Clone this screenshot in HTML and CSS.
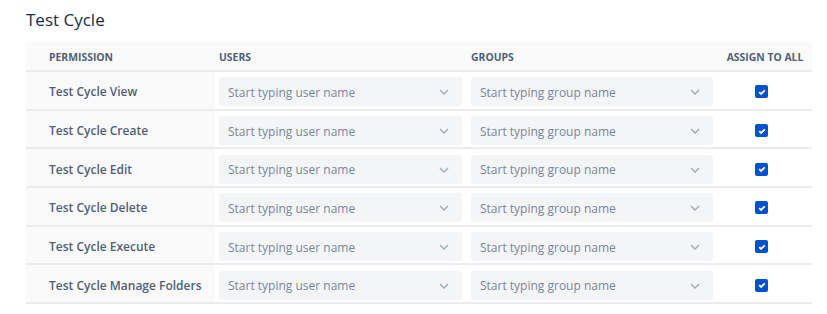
FILE: index.html
```html
<!DOCTYPE html>
<html lang="en">
  <head>
    <meta charset="utf-8" />
    <title>Test Cycle permissions</title>
    <link rel="stylesheet" href="styles.css">
  </head>
  <body>
    <div class="page">
      <h2 class="section-title">Test Cycle</h2>

      <div class="perm-table">
        <div class="perm-row head">
          <div class="cell name">Permission</div>
          <div class="cell">Users</div>
          <div class="cell">Groups</div>
          <div class="cell assign">Assign to all</div>
        </div>

        <div class="perm-row">
          <div class="cell name">Test Cycle View</div>
          <div class="cell"><div class="picker"><span>Start typing user name</span><svg class="chev" viewBox="0 0 10 6"><path d="M1 1l4 4 4-4" /></svg></div></div>
          <div class="cell"><div class="picker"><span>Start typing group name</span><svg class="chev" viewBox="0 0 10 6"><path d="M1 1l4 4 4-4" /></svg></div></div>
          <div class="cell check-cell"><span class="check"><svg viewBox="0 0 12 12"><path d="M3.2 6.2l1.9 1.8 3.7-3.7" /></svg></span></div>
        </div>

        <div class="perm-row">
          <div class="cell name">Test Cycle Create</div>
          <div class="cell"><div class="picker"><span>Start typing user name</span><svg class="chev" viewBox="0 0 10 6"><path d="M1 1l4 4 4-4" /></svg></div></div>
          <div class="cell"><div class="picker"><span>Start typing group name</span><svg class="chev" viewBox="0 0 10 6"><path d="M1 1l4 4 4-4" /></svg></div></div>
          <div class="cell check-cell"><span class="check"><svg viewBox="0 0 12 12"><path d="M3.2 6.2l1.9 1.8 3.7-3.7" /></svg></span></div>
        </div>

        <div class="perm-row">
          <div class="cell name">Test Cycle Edit</div>
          <div class="cell"><div class="picker"><span>Start typing user name</span><svg class="chev" viewBox="0 0 10 6"><path d="M1 1l4 4 4-4" /></svg></div></div>
          <div class="cell"><div class="picker"><span>Start typing group name</span><svg class="chev" viewBox="0 0 10 6"><path d="M1 1l4 4 4-4" /></svg></div></div>
          <div class="cell check-cell"><span class="check"><svg viewBox="0 0 12 12"><path d="M3.2 6.2l1.9 1.8 3.7-3.7" /></svg></span></div>
        </div>

        <div class="perm-row">
          <div class="cell name">Test Cycle Delete</div>
          <div class="cell"><div class="picker"><span>Start typing user name</span><svg class="chev" viewBox="0 0 10 6"><path d="M1 1l4 4 4-4" /></svg></div></div>
          <div class="cell"><div class="picker"><span>Start typing group name</span><svg class="chev" viewBox="0 0 10 6"><path d="M1 1l4 4 4-4" /></svg></div></div>
          <div class="cell check-cell"><span class="check"><svg viewBox="0 0 12 12"><path d="M3.2 6.2l1.9 1.8 3.7-3.7" /></svg></span></div>
        </div>

        <div class="perm-row">
          <div class="cell name">Test Cycle Execute</div>
          <div class="cell"><div class="picker"><span>Start typing user name</span><svg class="chev" viewBox="0 0 10 6"><path d="M1 1l4 4 4-4" /></svg></div></div>
          <div class="cell"><div class="picker"><span>Start typing group name</span><svg class="chev" viewBox="0 0 10 6"><path d="M1 1l4 4 4-4" /></svg></div></div>
          <div class="cell check-cell"><span class="check"><svg viewBox="0 0 12 12"><path d="M3.2 6.2l1.9 1.8 3.7-3.7" /></svg></span></div>
        </div>

        <div class="perm-row">
          <div class="cell name">Test Cycle Manage Folders</div>
          <div class="cell"><div class="picker"><span>Start typing user name</span><svg class="chev" viewBox="0 0 10 6"><path d="M1 1l4 4 4-4" /></svg></div></div>
          <div class="cell"><div class="picker"><span>Start typing group name</span><svg class="chev" viewBox="0 0 10 6"><path d="M1 1l4 4 4-4" /></svg></div></div>
          <div class="cell check-cell"><span class="check"><svg viewBox="0 0 12 12"><path d="M3.2 6.2l1.9 1.8 3.7-3.7" /></svg></span></div>
        </div>
      </div>
    </div>
  </body>
</html>
```

FILE: styles.css
```css
* {
  margin: 0;
  padding: 0;
  box-sizing: border-box;
}

body {
  font-family: "Open Sans", "Noto Sans", sans-serif;
  background: #ffffff;
  color: #42526e;
}

.page {
  padding: 8px 15px 0 26px;
}

.section-title {
  font-size: 17px;
  font-weight: 500;
  color: #172b4d;
  line-height: 24px;
  height: 34px;
}

.perm-table {
  width: 786px;
}

.perm-row {
  display: grid;
  grid-template-columns: 189px 252px 251px 94px;
  height: 38.7px;
  border-bottom: 2px solid #ebecf0;
}

.perm-row.head {
  height: 30px;
  background: #fafafa;
  font-size: 10.4px;
  font-weight: 700;
  text-transform: uppercase;
  color: #505f79;
}

.cell {
  display: flex;
  align-items: center;
  padding: 1px 5px 0 4px;
  white-space: nowrap;
}

.cell.name {
  padding-left: 23px;
}

.perm-row:not(.head) .cell {
  padding-top: 3px;
}

.perm-row:not(.head) .cell.name {
  background: #fafafa;
  font-size: 12px;
  font-weight: 600;
  color: #505f79;
}

.cell.assign {
  justify-content: center;
  padding: 1px 0 0;
}

.picker {
  display: flex;
  flex: 1;
  align-items: center;
  justify-content: space-between;
  height: 29px;
  padding: 1px 13px 0 9px;
  background: #f4f5f7;
  border-radius: 3px;
  font-size: 12px;
  color: #7a869a;
}

.chev {
  width: 10px;
  height: 6px;
  fill: none;
  stroke: #a5adba;
  stroke-width: 1.5;
}

.check-cell {
  padding-left: 37px;
}

.check {
  display: flex;
  align-items: center;
  justify-content: center;
  width: 13px;
  height: 13px;
  background: #0052cc;
  border-radius: 2px;
}

.check svg {
  width: 12px;
  height: 12px;
  fill: none;
  stroke: #ffffff;
  stroke-width: 1.8;
}
```
